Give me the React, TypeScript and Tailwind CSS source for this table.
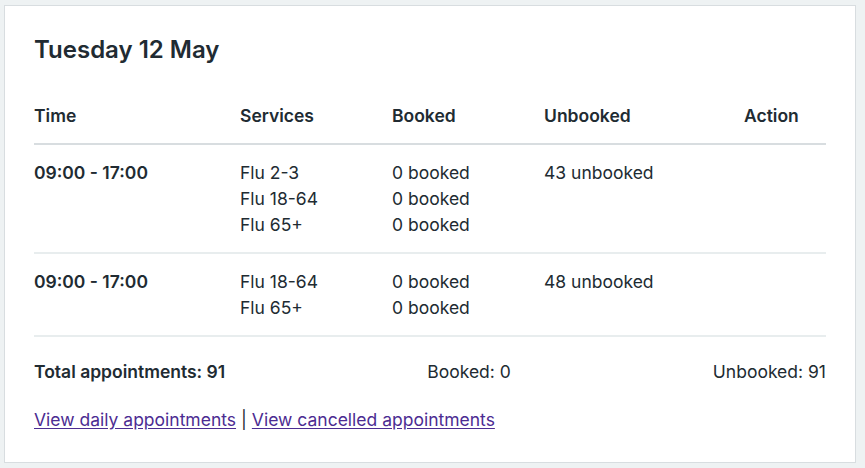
const sessions = [
  {
    time: "09:00 - 17:00",
    services: [
      { name: "Flu 2-3", booked: 0 },
      { name: "Flu 18-64", booked: 0 },
      { name: "Flu 65+", booked: 0 },
    ],
    unbooked: 43,
  },
  {
    time: "09:00 - 17:00",
    services: [
      { name: "Flu 18-64", booked: 0 },
      { name: "Flu 65+", booked: 0 },
    ],
    unbooked: 48,
  },
];

const cols = "grid grid-cols-[206px_152px_152px_200px_1fr]";

export default function App() {
  return (
    <div className="min-h-screen bg-[#eef2f3] pt-[5px] pl-1 pr-[9px] font-['Inter',sans-serif] text-[#212b32]">
      <div className="h-[458px] border border-[#d8dde0] bg-white px-[29px] pt-[29px]">
        <h2 className="text-[24px] font-semibold leading-[30px]">Tuesday 12 May</h2>

        <div className={`${cols} mt-[39px] border-b-2 border-[#d8dde0] pb-[15px] text-[17.5px] font-semibold leading-6`}>
          <div>Time</div>
          <div>Services</div>
          <div>Booked</div>
          <div>Unbooked</div>
          <div>Action</div>
        </div>

        {sessions.map((s, i) => (
          <div
            key={i}
            className={`${cols} border-b-2 border-[#e8edee] pt-[15px] pb-[14px] text-[17.5px] leading-[26px]`}
          >
            <div className="font-semibold">{s.time}</div>
            <div>
              {s.services.map((sv) => (
                <div key={sv.name}>{sv.name}</div>
              ))}
            </div>
            <div>
              {s.services.map((sv) => (
                <div key={sv.name}>{sv.booked} booked</div>
              ))}
            </div>
            <div>{s.unbooked} unbooked</div>
            <div />
          </div>
        ))}

        <div className="mt-[23px] flex justify-between text-[17.5px] leading-6">
          <span className="font-semibold">Total appointments: 91</span>
          <span>Booked: 0</span>
          <span>Unbooked: 91</span>
        </div>

        <div className="mt-[24px] flex items-center gap-[5px] text-[17.5px] leading-6">
          <a href="#" className="text-[#4c2c92] underline underline-offset-2">
            View daily appointments
          </a>
          <span className="text-[#212b32]">|</span>
          <a href="#" className="text-[#4c2c92] underline underline-offset-2">
            View cancelled appointments
          </a>
        </div>
      </div>
    </div>
  );
}
